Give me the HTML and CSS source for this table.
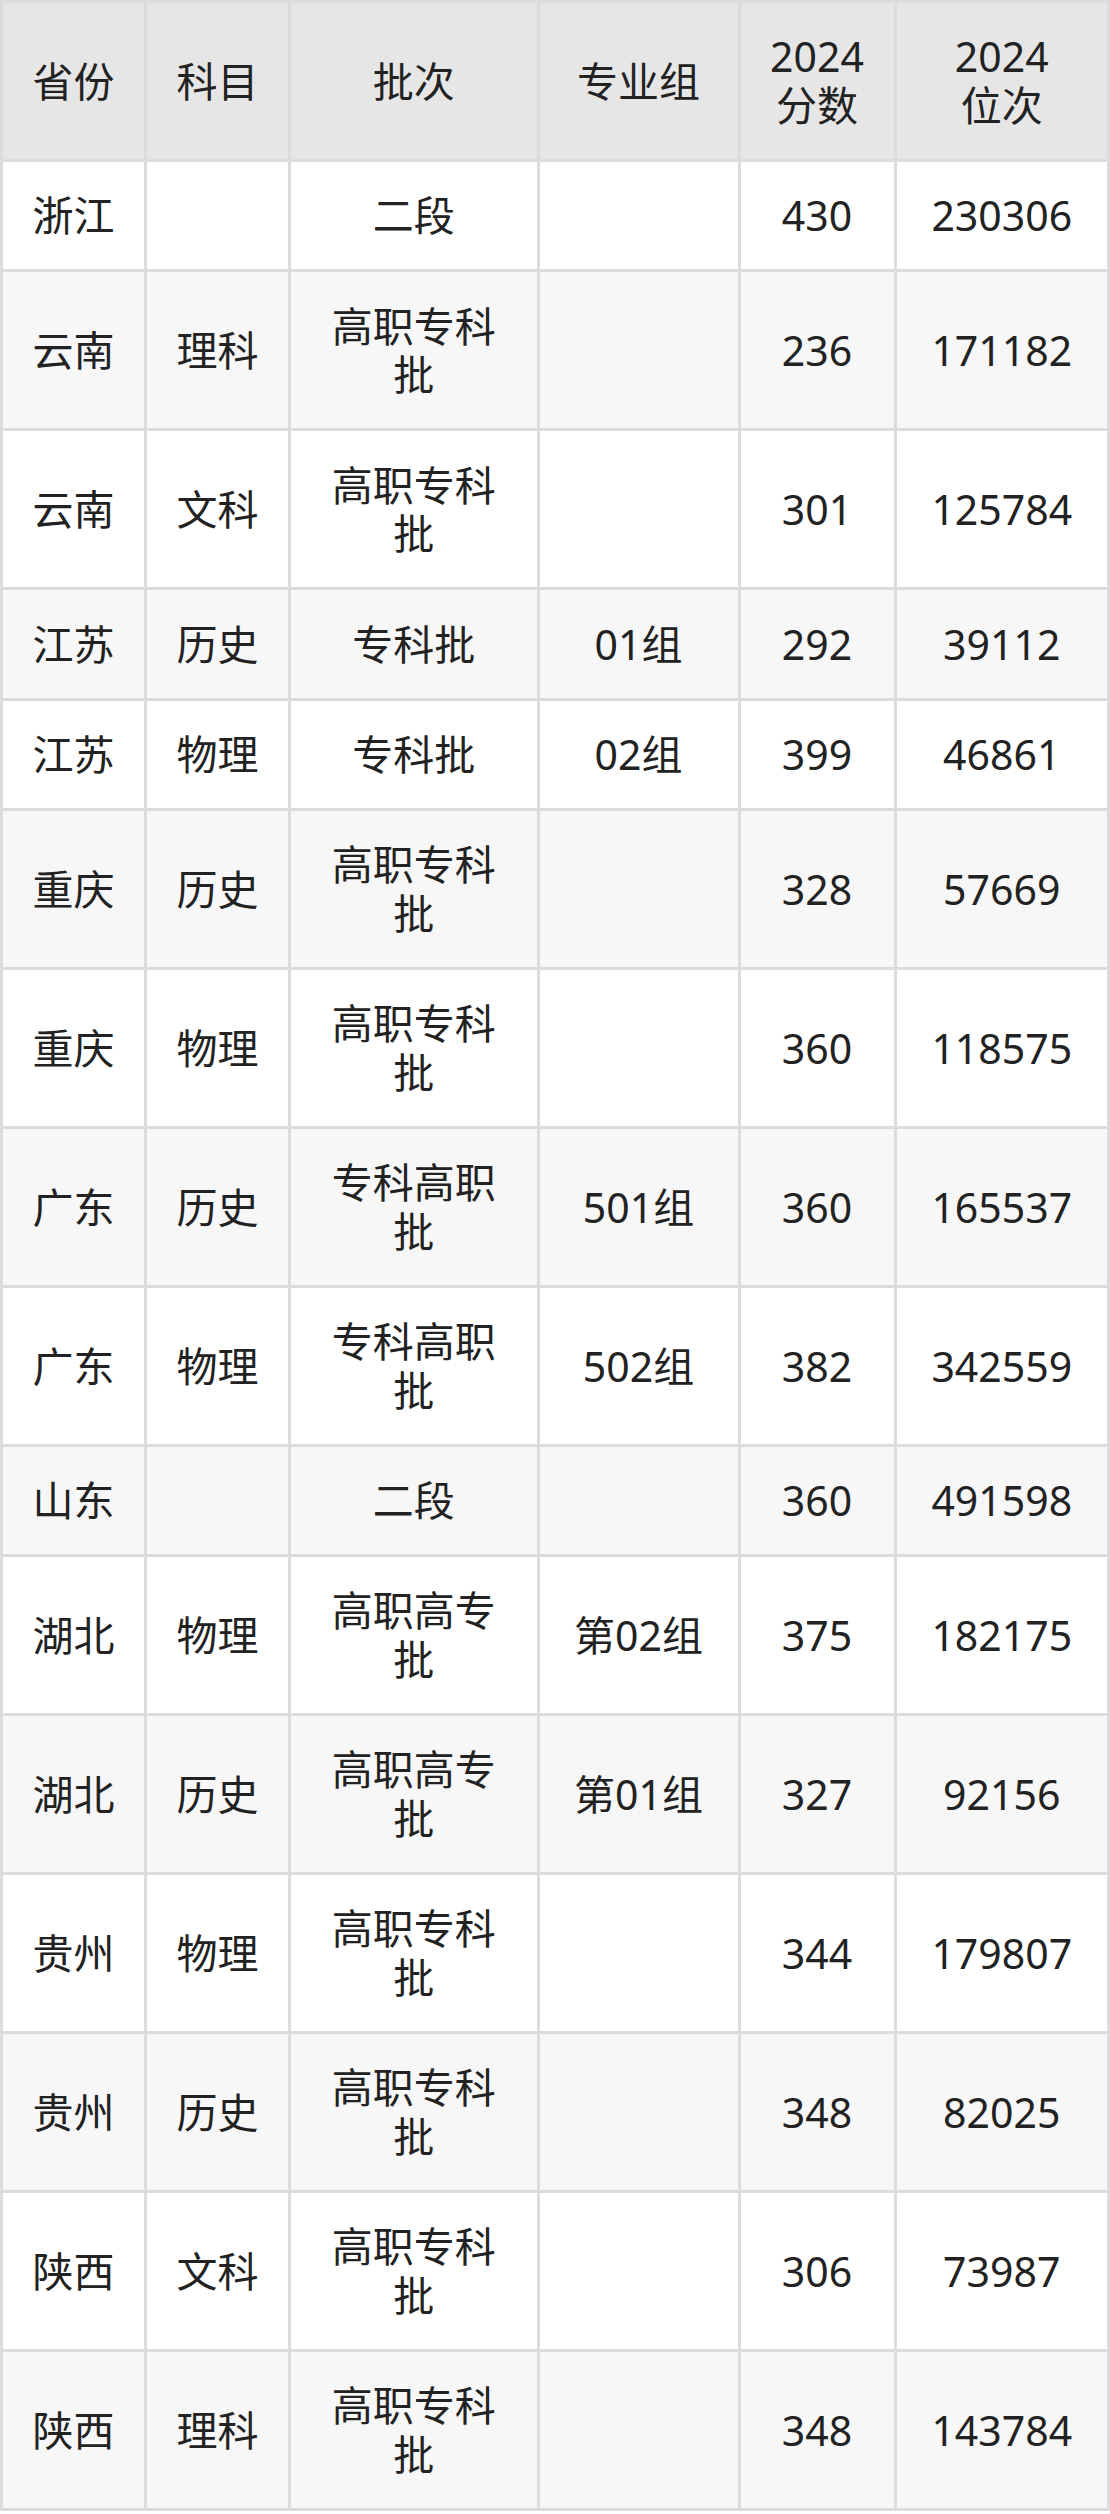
FILE: index.html
```html
<!DOCTYPE html>
<html lang="zh-CN">
<head>
<meta charset="utf-8">
<title>2024 分数位次</title>
<link rel="stylesheet" href="styles.css">
</head>
<body>
<table class="score-table">
  <colgroup>
    <col class="c-prov">
    <col class="c-subj">
    <col class="c-batch">
    <col class="c-group">
    <col class="c-score">
    <col class="c-rank">
  </colgroup>
  <thead>
    <tr>
      <th>省份</th>
      <th>科目</th>
      <th>批次</th>
      <th>专业组</th>
      <th>2024分数</th>
      <th class="th-rank">2024位次</th>
    </tr>
  </thead>
  <tbody>
    <tr><td>浙江</td><td></td><td>二段</td><td></td><td>430</td><td>230306</td></tr>
    <tr><td>云南</td><td>理科</td><td>高职专科批</td><td></td><td>236</td><td>171182</td></tr>
    <tr><td>云南</td><td>文科</td><td>高职专科批</td><td></td><td>301</td><td>125784</td></tr>
    <tr><td>江苏</td><td>历史</td><td>专科批</td><td>01组</td><td>292</td><td>39112</td></tr>
    <tr><td>江苏</td><td>物理</td><td>专科批</td><td>02组</td><td>399</td><td>46861</td></tr>
    <tr><td>重庆</td><td>历史</td><td>高职专科批</td><td></td><td>328</td><td>57669</td></tr>
    <tr><td>重庆</td><td>物理</td><td>高职专科批</td><td></td><td>360</td><td>118575</td></tr>
    <tr><td>广东</td><td>历史</td><td>专科高职批</td><td>501组</td><td>360</td><td>165537</td></tr>
    <tr><td>广东</td><td>物理</td><td>专科高职批</td><td>502组</td><td>382</td><td>342559</td></tr>
    <tr><td>山东</td><td></td><td>二段</td><td></td><td>360</td><td>491598</td></tr>
    <tr><td>湖北</td><td>物理</td><td>高职高专批</td><td>第02组</td><td>375</td><td>182175</td></tr>
    <tr><td>湖北</td><td>历史</td><td>高职高专批</td><td>第01组</td><td>327</td><td>92156</td></tr>
    <tr><td>贵州</td><td>物理</td><td>高职专科批</td><td></td><td>344</td><td>179807</td></tr>
    <tr><td>贵州</td><td>历史</td><td>高职专科批</td><td></td><td>348</td><td>82025</td></tr>
    <tr><td>陕西</td><td>文科</td><td>高职专科批</td><td></td><td>306</td><td>73987</td></tr>
    <tr><td>陕西</td><td>理科</td><td>高职专科批</td><td></td><td>348</td><td>143784</td></tr>
  </tbody>
</table>
</body>
</html>
```

FILE: styles.css
```css
html, body {
  margin: 0;
  padding: 0;
  background: #ffffff;
}

.score-table {
  width: 1110px;
  table-layout: fixed;
  border-collapse: separate;
  border-spacing: 0;
  border-top: 3px solid #dcdcdc;
  border-left: 3px solid #dcdcdc;
  font-family: "Noto Sans", "Noto Sans CJK SC", sans-serif;
  font-size: 41px;
  line-height: 48.7px;
  color: #222222;
}

.c-prov { width: 144px; }
.c-subj { width: 144px; }
.c-batch { width: 248.5px; }
.c-group { width: 201px; }
.c-score { width: 156px; }
.c-rank { width: 213.5px; }

.score-table th,
.score-table td {
  box-sizing: border-box;
  padding: 29.3px 22px;
  border-right: 3px solid #dcdcdc;
  border-bottom: 3px solid #dcdcdc;
  text-align: center;
  vertical-align: middle;
  font-weight: 400;
}

.score-table th {
  background: #e6e6e6;
}

.score-table th.th-rank {
  padding-left: 40px;
  padding-right: 40px;
}

.score-table tbody tr:nth-child(odd) td {
  background: #ffffff;
}

.score-table tbody tr:nth-child(even) td {
  background: #f7f7f7;
}
```
